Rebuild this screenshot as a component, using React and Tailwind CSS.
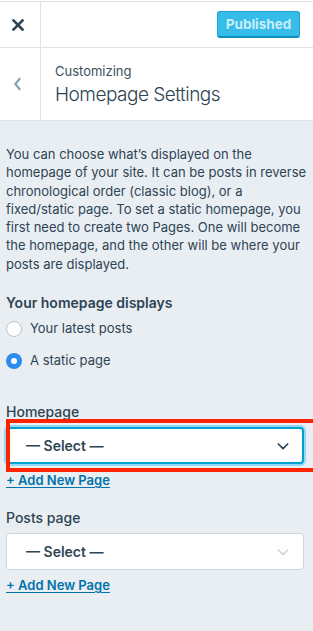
import React from "react";

function Chevron({ className }) {
  return (
    <svg viewBox="0 0 24 24" width="16" height="16" className={className} fill="none" stroke="currentColor" strokeWidth="2.6" strokeLinecap="round" strokeLinejoin="round">
      <path d="M5 9l7 7 7-7" />
    </svg>
  );
}

function Select({ focused }) {
  return (
    <div
      className={
        focused
          ? "h-[37px] mr-[3px] bg-white rounded-[4px] border-2 border-[#00a0d2] shadow-[0_0_0_2px_#8fd8f6] flex items-center pl-[18px] pr-[11px]"
          : "h-[37px] mr-[3px] bg-white rounded-[4px] border border-[#ccd6e0] flex items-center pl-[19px] pr-[12px]"
      }
    >
      <span className="flex-1 text-[14px] font-semibold text-[#2e4453]">— Select —</span>
      <Chevron className={focused ? "text-[#2e4453]" : "text-[#c8d7e1]"} />
    </div>
  );
}

export default function App() {
  return (
    <div className="w-[313px] h-[631px] bg-[#e9eef3] font-['Inter',sans-serif] text-[#2e4453] overflow-hidden">
      <div className="bg-white pt-px">
        <div className="h-[47px] border-t border-b border-[#dde3e9] flex">
          <div className="w-[41px] border-r border-[#dde3e9] flex items-center justify-center pr-[5px]">
            <svg viewBox="0 0 12 12" width="12" height="12" stroke="#2e4453" strokeWidth="2.6" strokeLinecap="square">
              <path d="M1.5 1.5l9 9M10.5 1.5l-9 9" />
            </svg>
          </div>
          <div className="flex-1 flex items-center justify-end pr-[13px]">
            <div className="h-[27px] w-[83px] rounded-[3px] bg-[#35bce8] border border-[#1ba4d4] border-b-2 border-b-[#0b8fbf] flex items-center justify-center text-[13.5px] font-bold text-[#c8eefb]">
              Published
            </div>
          </div>
        </div>
        <div className="h-[73px] border-b border-[#dde3e9] flex">
          <div className="w-[41px] border-r border-[#dde3e9] flex items-center justify-center pr-[6px]">
            <svg viewBox="0 0 10 16" width="9" height="14" fill="none" stroke="#87a6bc" strokeWidth="2.6" strokeLinecap="round" strokeLinejoin="round">
              <path d="M7.5 2L2.5 8l5 6" />
            </svg>
          </div>
          <div className="flex-1 pl-[14px] pt-[14px]">
            <div className="text-[13px] leading-[18px] text-[#3d4f5c]">Customizing</div>
            <div className="text-[19px] leading-[28px] font-light text-[#2e4453] tracking-[-0.5px] mt-[1px]">Homepage Settings</div>
          </div>
        </div>
      </div>

      <div className="px-[6px] pt-[24px]">
        <p className="text-[13px] leading-[18.3px] text-[#2e4453]">
          You can choose what’s displayed on the homepage of your site. It can be posts in reverse chronological order (classic blog), or a fixed/static page. To set a static homepage, you first need to create two Pages. One will become the homepage, and the other will be where your posts are displayed.
        </p>

        <div className="mt-[20px] text-[14px] leading-[20px] font-semibold text-[#2e4453]">Your homepage displays</div>
        <div className="mt-[6px] flex items-center gap-[8px] h-[20px]">
          <span className="w-[16px] h-[16px] rounded-full bg-white border border-[#b9c4cf]" />
          <span className="text-[13px] text-[#2e4453]">Your latest posts</span>
        </div>
        <div className="mt-[12px] flex items-center gap-[8px] h-[20px]">
          <span className="w-[16px] h-[16px] rounded-full bg-[#2d8cef] flex items-center justify-center">
            <span className="w-[6px] h-[6px] rounded-full bg-white" />
          </span>
          <span className="text-[13px] text-[#2e4453]">A static page</span>
        </div>

        <div className="mt-[31px] text-[14px] leading-[20px] font-medium text-[#2e4453]">Homepage</div>
        <div className="relative mt-[5px]">
          <Select focused />
          <div className="absolute left-[0px] -right-[20px] -top-[8px] -bottom-[8px] border-[4px] border-[#ff2300] pointer-events-none" />
        </div>
        <div className="mt-[7px] text-[13px] leading-[18px] font-semibold text-[#0073aa] underline underline-offset-2 decoration-1">
          <span>+ Add New Page</span>
        </div>

        <div className="mt-[19px] text-[14px] leading-[20px] font-medium text-[#2e4453]">Posts page</div>
        <div className="mt-[5px]">
          <Select />
        </div>
        <div className="mt-[6px] text-[13px] leading-[18px] font-semibold text-[#0073aa] underline underline-offset-2 decoration-1">
          <span>+ Add New Page</span>
        </div>
      </div>
    </div>
  );
}
